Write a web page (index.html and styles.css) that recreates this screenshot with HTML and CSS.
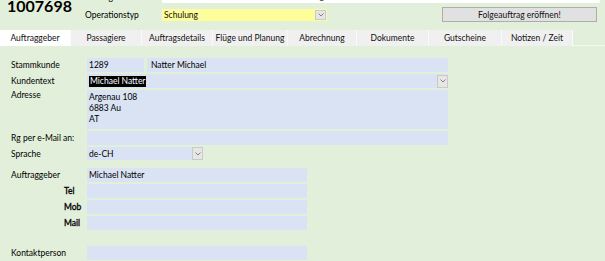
FILE: index.html
```html
<!DOCTYPE html>
<html lang="de">
<head>
<meta charset="utf-8">
<title>Auftrag 1007698</title>
<link rel="stylesheet" href="styles.css">
</head>
<body>
<div class="head">
  <div class="num">1007698</div>
  <div class="hlabel">Auftrag</div>
  <div class="hfield-white">RYT HS-L2L Michael Natter mit Cano Kongett!</div>
  <div class="hlabel">Operationstyp</div>
  <div class="hrow2">
    <div class="ysel">
      <span class="ysel-text">Schulung</span>
      <span class="dd dd-y"><svg width="6" height="4" viewBox="0 0 6 4"><polyline points="0.5,0.5 3,3 5.5,0.5" fill="none" stroke="#777" stroke-width="0.9"/></svg></span>
    </div>
    <div class="btn">Folgeauftrag eröffnen!</div>
  </div>
</div>

<div class="tabs">
  <div class="tab active t1">Auftraggeber</div>
  <div class="tab t2">Passagiere</div>
  <div class="tab t3">Auftragsdetails</div>
  <div class="tab t4">Flüge und Planung</div>
  <div class="tab t5">Abrechnung</div>
  <div class="tab t6">Dokumente</div>
  <div class="tab t7">Gutscheine</div>
  <div class="tab t8">Notizen / Zeit</div>
  <div class="tab-rest"></div>
</div>

<div class="panel">
  <div class="row">
    <div class="lbl">Stammkunde</div>
    <div class="fld w-nr">1289</div>
    <div class="fld w-name">Natter Michael</div>
  </div>
  <div class="row">
    <div class="lbl">Kundentext</div>
    <div class="fld w-full sel">
      <span class="hl">Michael Natter</span>
      <span class="dd dd-b"><svg width="6" height="4" viewBox="0 0 6 4"><polyline points="0.5,0.5 3,3 5.5,0.5" fill="none" stroke="#777" stroke-width="0.9"/></svg></span>
    </div>
  </div>
  <div class="row row-addr">
    <div class="lbl lbl-top">Adresse</div>
    <div class="fld w-full addr">Argenau 108<br>6883 Au<br>AT</div>
  </div>
  <div class="row">
    <div class="lbl">Rg per e-Mail an:</div>
    <div class="fld w-full"></div>
  </div>
  <div class="row row-13">
    <div class="lbl">Sprache</div>
    <div class="fld w-lang sel">
      <span>de-CH</span>
      <span class="dd dd-b"><svg width="6" height="4" viewBox="0 0 6 4"><polyline points="0.5,0.5 3,3 5.5,0.5" fill="none" stroke="#777" stroke-width="0.9"/></svg></span>
    </div>
  </div>
  <div class="row row-gap8">
    <div class="lbl">Auftraggeber</div>
    <div class="fld w-mid">Michael Natter</div>
  </div>
  <div class="row">
    <div class="lbl lbl-sub">Tel</div>
    <div class="fld w-mid"></div>
  </div>
  <div class="row">
    <div class="lbl lbl-sub">Mob</div>
    <div class="fld w-mid"></div>
  </div>
  <div class="row">
    <div class="lbl lbl-sub">Mail</div>
    <div class="fld w-mid"></div>
  </div>
  <div class="row row-gap16">
    <div class="lbl">Kontaktperson</div>
    <div class="fld w-mid"></div>
  </div>
</div>
</body>
</html>
```

FILE: styles.css
```css
html, body {
  margin: 0;
  padding: 0;
}
body {
  background: #e2efda;
  font-family: Lato, "Open Sans", "Liberation Sans", sans-serif;
  font-size: 8.5px;
  color: #111;
  width: 605px;
  height: 261px;
  overflow: hidden;
}

/* header */
.head {
  display: grid;
  grid-template-columns: 85px 77px 1fr;
  grid-template-rows: 13px 15px;
  row-gap: 4px;
  margin-top: -10px;
  height: 40px;
}
.num {
  grid-row: 1 / 3;
  font-weight: 700;
  font-size: 16px;
  line-height: 16px;
  padding-left: 7px;
  margin-top: 8px;
  color: #000;
}
.hlabel {
  display: flex;
  align-items: center;
  color: #000;
}
.hfield-white {
  background: #fff;
  margin-right: 5px;
  padding-left: 2px;
  line-height: 13px;
  white-space: nowrap;
  overflow: hidden;
}
.hrow2 {
  display: flex;
  align-items: center;
}
.ysel {
  width: 165px;
  height: 12px;
  background: #fdfd9a;
  display: flex;
  align-items: center;
  justify-content: space-between;
  padding-left: 2px;
  box-sizing: border-box;
}
.btn {
  margin-left: auto;
  margin-right: 8px;
  width: 155px;
  height: 15px;
  box-sizing: border-box;
  background: #e1e1e1;
  border: 1px solid #adadad;
  display: flex;
  align-items: center;
  justify-content: center;
  color: #111;
}

/* dropdown buttons */
.dd {
  width: 11px;
  box-sizing: border-box;
  background: #e6e6e6;
  border: 1px solid #c9c9c9;
  display: flex;
  align-items: center;
  justify-content: center;
}
.dd-y {
  height: 10px;
  margin-right: 1px;
}
.dd-b {
  height: 13px;
}

/* tabs */
.tabs {
  display: flex;
  height: 16px;
}
.tab {
  background: #f0f0f0;
  border-right: 1px solid #fafafa;
  box-sizing: border-box;
  display: flex;
  align-items: center;
  justify-content: center;
  white-space: nowrap;
  color: #111;
}
.tab.active {
  background: #fff;
}
.t1 { width: 71px; }
.t2 { width: 71px; }
.t3 { width: 71px; }
.t4 { width: 75px; }
.t5 { width: 69px; }
.t6 { width: 72px; }
.t7 { width: 73px; }
.t8 { width: 71px; }
.tab-rest {
  flex: 1;
  border-bottom: 1px solid #f3f8ef;
  box-sizing: border-box;
}

/* panel */
.panel {
  padding-top: 12px;
  display: flex;
  flex-direction: column;
}
.row {
  display: flex;
  height: 14px;
  margin-top: 2px;
}
.row:first-child {
  margin-top: 0;
}
.row-addr {
  height: 39px;
}
.row-13 {
  height: 13px;
}
.row-gap8 {
  margin-top: 8px;
}
.row-gap16 {
  margin-top: 16px;
}
.lbl {
  width: 87px;
  padding-left: 11px;
  box-sizing: border-box;
  display: flex;
  align-items: center;
  color: #000;
  white-space: nowrap;
}
.lbl-top {
  align-items: flex-start;
  line-height: 10px;
}
.lbl-sub {
  padding-left: 64px;
  -webkit-text-stroke: 0.3px #000;
}
.fld {
  background: #dae3f3;
  padding-left: 2px;
  box-sizing: border-box;
  display: flex;
  align-items: center;
  white-space: nowrap;
  color: #000;
}
.w-nr { width: 57px; }
.w-name { width: 301px; margin-left: 3px; padding-left: 4px; }
.w-full { width: 361px; }
.w-lang { width: 116px; }
.w-mid { width: 220px; }
.sel {
  justify-content: space-between;
}
.hl {
  background: #000;
  color: #fff;
  padding: 0 1px;
  line-height: 11px;
}
.addr {
  display: block;
  line-height: 11.3px;
  padding-top: 1.5px;
  white-space: normal;
}
```
